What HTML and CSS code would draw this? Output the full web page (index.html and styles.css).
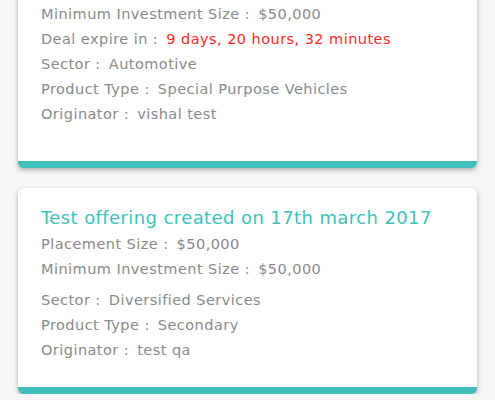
FILE: index.html
```html
<!DOCTYPE html>
<html lang="en">
<head>
  <meta charset="UTF-8">
  <title>Offerings</title>
  <link rel="stylesheet" href="styles.css">
</head>
<body>
  <div class="list">
    <div class="card card-first">
      <div class="row"><span class="label">Minimum Investment Size :</span> <span class="value">$50,000</span></div>
      <div class="row"><span class="label">Deal expire in :</span> <span class="value expire">9 days, 20 hours, 32 minutes</span></div>
      <div class="row"><span class="label">Sector :</span> <span class="value">Automotive</span></div>
      <div class="row"><span class="label">Product Type :</span> <span class="value">Special Purpose Vehicles</span></div>
      <div class="row"><span class="label">Originator :</span> <span class="value">vishal test</span></div>
    </div>

    <div class="card">
      <h3 class="title">Test offering created on 17th march 2017</h3>
      <div class="row"><span class="label">Placement Size :</span> <span class="value">$50,000</span></div>
      <div class="row"><span class="label">Minimum Investment Size :</span> <span class="value">$50,000</span></div>
      <div class="row spacer"></div>
      <div class="row"><span class="label">Sector :</span> <span class="value">Diversified Services</span></div>
      <div class="row"><span class="label">Product Type :</span> <span class="value">Secondary</span></div>
      <div class="row"><span class="label">Originator :</span> <span class="value">test qa</span></div>
    </div>
  </div>
</body>
</html>
```

FILE: styles.css
```css
body {
  margin: 0;
  background-color: #f6f6f6;
  font-family: "DejaVu Sans", sans-serif;
  overflow: hidden;
}

.list {
  margin-top: -16px;
  padding: 0 18px;
  display: flex;
  flex-direction: column;
  gap: 20px;
}

.card {
  background-color: #fff;
  border-radius: 6px;
  border-bottom: 7px solid #40bfba;
  box-shadow: 0 2px 5px rgba(0, 0, 0, 0.3);
  padding: 16px 23px 24px;
}

.card-first {
  padding-top: 18px;
  padding-bottom: 34px;
}

.title {
  margin: 0;
  font-size: 18px;
  font-weight: normal;
  letter-spacing: 0.4px;
  color: #40c2bc;
  line-height: 28px;
}

.row {
  font-size: 14.5px;
  letter-spacing: 0.45px;
  line-height: 25px;
  color: #8a8a8a;
  white-space: nowrap;
}

.value {
  margin-left: 3px;
}

.row.spacer {
  height: 6px;
}

.expire {
  color: #ff2a1c;
}
```
